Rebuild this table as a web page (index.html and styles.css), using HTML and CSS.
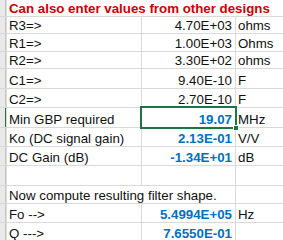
FILE: index.html
```html
<!DOCTYPE html>
<html>
<head>
<meta charset="utf-8">
<link rel="stylesheet" href="styles.css">
</head>
<body>
<div class="sheet">
  <div class="hdr"></div><div class="c span3 title">Can also enter values from other designs</div>
  <div class="hdr"></div><div class="c">R3=&gt;</div><div class="c num">4.70E+03</div><div class="c">ohms</div>
  <div class="hdr"></div><div class="c">R1=&gt;</div><div class="c num">1.00E+03</div><div class="c">Ohms</div>
  <div class="hdr"></div><div class="c">R2=&gt;</div><div class="c num">3.30E+02</div><div class="c">ohms</div>
  <div class="hdr"></div><div class="c">C1=&gt;</div><div class="c num">9.40E-10</div><div class="c">F</div>
  <div class="hdr"></div><div class="c">C2=&gt;</div><div class="c num">2.70E-10</div><div class="c">F</div>
  <div class="hdr sel-hdr"></div><div class="c">Min GBP required</div><div class="c num blue sel">19.07</div><div class="c">MHz</div>
  <div class="hdr"></div><div class="c">Ko (DC signal gain)</div><div class="c num blue">2.13E-01</div><div class="c">V/V</div>
  <div class="hdr"></div><div class="c">DC Gain (dB)</div><div class="c num blue">-1.34E+01</div><div class="c">dB</div>
  <div class="hdr"></div><div class="c"></div><div class="c"></div><div class="c"></div>
  <div class="hdr"></div><div class="c span2">Now compute resulting filter shape.</div><div class="c"></div>
  <div class="hdr"></div><div class="c">Fo --&gt;</div><div class="c num blue">5.4994E+05</div><div class="c">Hz</div>
  <div class="hdr"></div><div class="c">Q ---&gt;</div><div class="c num blue">7.6550E-01</div><div class="c"></div>
</div>
</body>
</html>
```
FILE: styles.css
```css
html, body {
  margin: 0;
  padding: 0;
  background: #ffffff;
  overflow: hidden;
}
.sheet {
  display: grid;
  grid-template-columns: 6px 134px 93px 1fr;
  grid-template-rows: 16px 16px 17px 16px 19px 18px 19px 18px 18px 19px 17px 18px 18px;
  gap: 1px;
  background: #d9d9d9;
  width: 283px;
  height: 240px;
  font-family: "Liberation Sans", Arial, sans-serif;
  font-size: 13.3px;
  color: #111111;
}
.hdr {
  background: #e9e9e9;
  border-right: 1px solid #c8c8c8;
}
.sel-hdr {
  border-right: 1px solid #217346;
}
.c {
  background: #ffffff;
  display: flex;
  align-items: flex-end;
  padding: 0 2px 0 2px;
  line-height: 15px;
  white-space: nowrap;
  overflow: visible;
  min-width: 0;
}
.span3 { grid-column: span 3; }
.span2 { grid-column: span 2; }
.title {
  color: #cc0000;
  font-weight: bold;
  align-items: center;
}
.num {
  justify-content: flex-end;
  padding-right: 3px;
}
.blue {
  color: #0070c0;
  font-weight: bold;
}
.sel {
  position: relative;
}
.sel::after {
  content: "";
  position: absolute;
  left: -2px;
  top: -2px;
  right: -2px;
  bottom: -2px;
  border: 2px solid #217346;
}
.sel::before {
  content: "";
  position: absolute;
  right: -4px;
  bottom: -4px;
  width: 4px;
  height: 4px;
  background: #217346;
  border: 1px solid #ffffff;
  z-index: 1;
}
```
